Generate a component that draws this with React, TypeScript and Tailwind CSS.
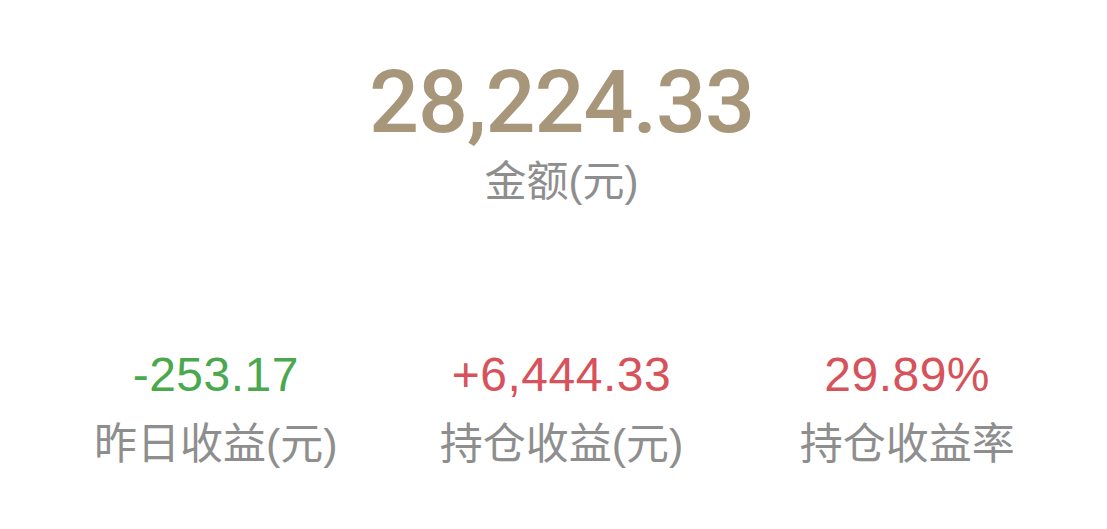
export default function App() {
  const sans = { fontFamily: '"Liberation Sans", "Noto Sans CJK SC", sans-serif' };
  return (
    <div className="w-[1107px] h-[529px] bg-white flex flex-col" style={sans}>
      <div className="flex flex-col items-center pl-[16px] pt-[52px]">
        <div className="text-[88px] leading-[100px] text-[#a8967a] font-medium tracking-[-1px]" style={{ fontFamily: 'Roboto, "Liberation Sans", sans-serif' }}>
          28,224.33
        </div>
        <div className="text-[42px] leading-[48px] text-[#8e8e8e] mt-[6px]">金额(元)</div>
      </div>
      <div className="grid grid-cols-3 pl-[43px] pr-[27px] mt-[144px]">
        {[
          ["-253.17", "昨日收益(元)", "text-[#4aa84e]"],
          ["+6,444.33", "持仓收益(元)", "text-[#d7525a]"],
          ["29.89%", "持仓收益率", "text-[#d7525a]"],
        ].map(([v, l, c]) => (
          <div key={l} className="flex flex-col items-center">
            <div className={`text-[48px] leading-[50px] tracking-[0.5px] ${c}`}>{v}</div>
            <div className="text-[43px] leading-[50px] text-[#8e8e8e] mt-[19px]">{l}</div>
          </div>
        ))}
      </div>
    </div>
  );
}
